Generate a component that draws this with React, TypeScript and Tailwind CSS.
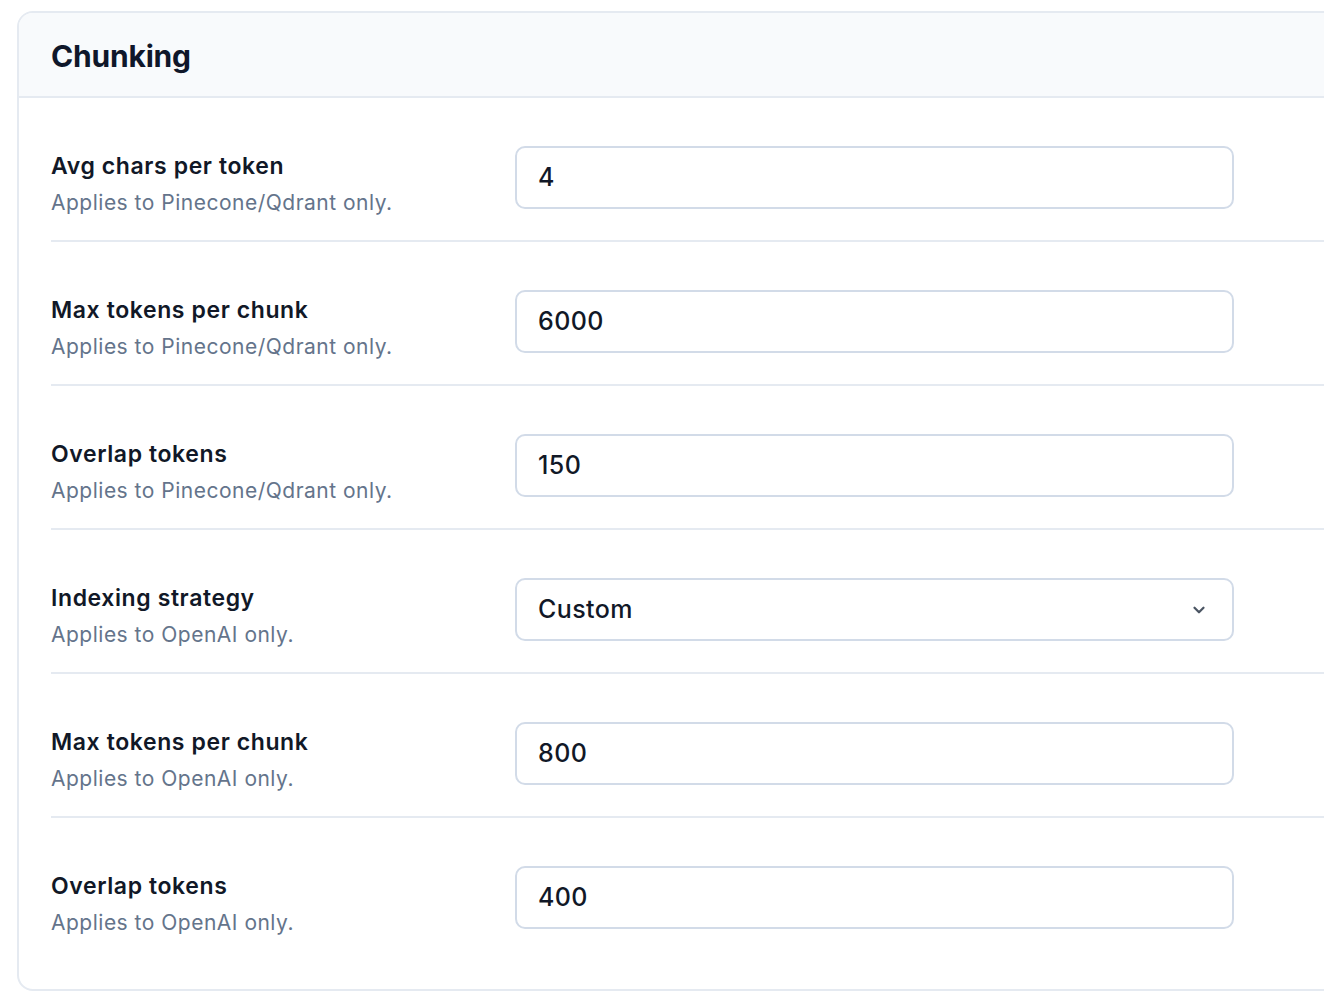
export default function App() {
  const rows = [
    { l: "Avg chars per token", s: "Applies to Pinecone/Qdrant only.", v: "4" },
    { l: "Max tokens per chunk", s: "Applies to Pinecone/Qdrant only.", v: "6000" },
    { l: "Overlap tokens", s: "Applies to Pinecone/Qdrant only.", v: "150" },
    { l: "Indexing strategy", s: "Applies to OpenAI only.", v: "Custom", sel: true },
    { l: "Max tokens per chunk", s: "Applies to OpenAI only.", v: "800" },
    { l: "Overlap tokens", s: "Applies to OpenAI only.", v: "400" },
  ];
  return (
    <div className="bg-white min-h-[1002px] pt-[11px] pl-[17px] overflow-hidden" style={{ fontFamily: "Inter, 'Noto Sans', sans-serif" }}>
      <div className="w-[1340px] border-2 border-[#e5eaf1] rounded-[16px] overflow-hidden pb-[27px]">
        <div className="bg-[#f8fafc] h-[85px] border-b-2 border-[#e5eaf1] flex items-center pl-[32px]">
          <h1 className="text-[30px] font-bold text-[#0f172a] tracking-[-0.2px] mt-[3px]">Chunking</h1>
        </div>
        {rows.map((r, i) => (
          <div key={i} className={`ml-[32px] flex h-[144px] pt-[48px] ${i < rows.length - 1 ? "border-b-2 border-[#e5eaf1]" : ""}`}>
            <div className="w-[464px] pt-[6px]">
              <div className="text-[23px] font-semibold text-[#111827] leading-[28px] tracking-[0.6px]">{r.l}</div>
              <div className="text-[21px] text-[#64748b] leading-[26px] mt-[10px] tracking-[0.5px]">{r.s}</div>
            </div>
            <div className="w-[719px] h-[63px] border-2 border-[#d2dbe8] rounded-[10px] flex items-center px-[21px] justify-between">
              <span className="text-[25px] text-[#111827] font-medium tracking-[0.4px]">{r.v}</span>
              {r.sel && (
                <svg width="18" height="18" viewBox="0 0 24 24" fill="none" stroke="#4b5563" strokeWidth="3" strokeLinecap="round" strokeLinejoin="round" className="mr-[3px]">
                  <path d="M6 9l6 6 6-6" />
                </svg>
              )}
            </div>
          </div>
        ))}
      </div>
    </div>
  );
}
